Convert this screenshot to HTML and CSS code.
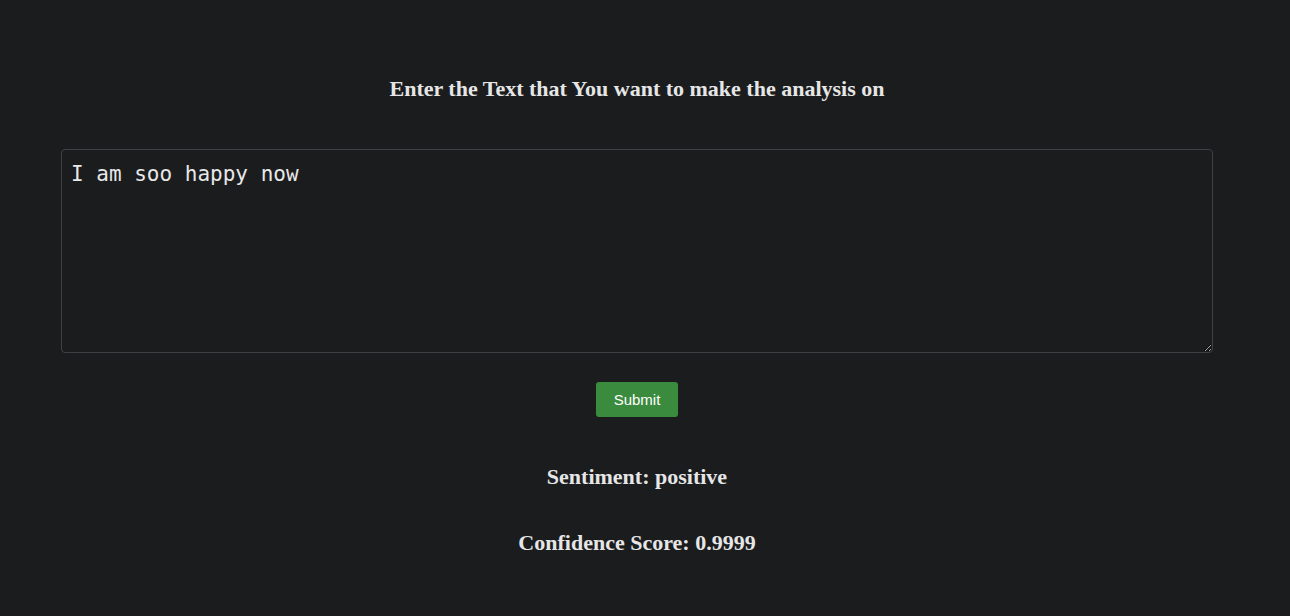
FILE: index.html
```html
<!DOCTYPE html>
<html>
<head>
<meta charset="utf-8">
<link rel="stylesheet" href="styles.css">
</head>
<body>
<div class="page">
  <h2 class="title">Enter the Text that You want to make the analysis on</h2>
  <form class="form">
    <textarea class="input">I am soo happy now</textarea>
    <button type="button" class="submit">Submit</button>
  </form>
  <div class="result">
    <h2 class="line">Sentiment: positive</h2>
    <h2 class="line">Confidence Score: 0.9999</h2>
  </div>
</div>
</body>
</html>
```
FILE: styles.css
```css
html, body {
  margin: 0;
  padding: 0;
  background: #1b1c1e;
  height: 100%;
}
body {
  font-family: "Liberation Serif", "Times New Roman", serif;
  color: #e6e6e6;
}
.page {
  width: 1274px;
  display: flex;
  flex-direction: column;
  align-items: center;
  padding-top: 77px;
}
.title {
  margin: 0;
  font-size: 22px;
  font-weight: bold;
  line-height: 24px;
}
.form {
  display: flex;
  flex-direction: column;
  align-items: center;
  margin-top: 48px;
}
.input {
  width: 1152px;
  height: 204px;
  box-sizing: border-box;
  background: #1b1c1e;
  color: #e8e8e8;
  border: 1px solid #3f4044;
  border-radius: 4px;
  padding: 10px 9px;
  font-family: "DejaVu Sans Mono", monospace;
  font-size: 21px;
  line-height: 28px;
  resize: vertical;
  outline: none;
  margin: 0;
}
.submit {
  margin-top: 29px;
  width: 82px;
  height: 35px;
  background: #3a8b3e;
  color: #ffffff;
  border: none;
  border-radius: 3px;
  font-family: "Liberation Sans", Arial, sans-serif;
  font-size: 15px;
  padding: 0;
}
.result {
  display: flex;
  flex-direction: column;
  align-items: center;
  margin-top: 48px;
  gap: 42px;
}
.line {
  margin: 0;
  font-size: 22px;
  line-height: 24px;
  font-weight: bold;
}
```
